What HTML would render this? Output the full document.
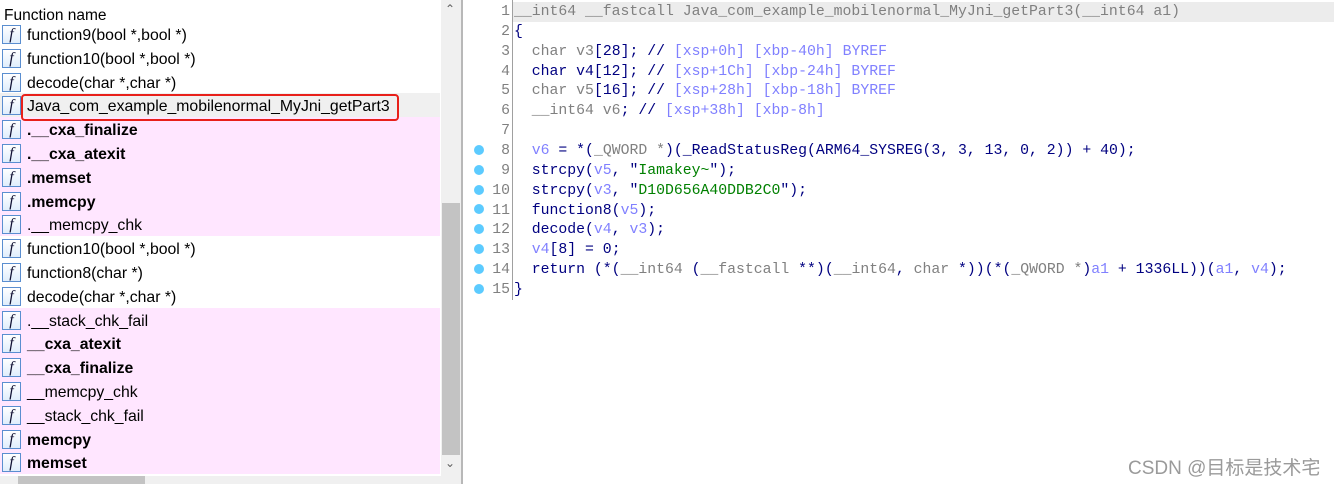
<!DOCTYPE html>
<html><head><meta charset="utf-8"><style>
*{margin:0;padding:0;box-sizing:border-box}
body{width:1334px;height:484px;background:#fff;position:relative;overflow:hidden;font-family:"Liberation Sans","Noto Sans CJK SC",sans-serif}
.hdr{position:absolute;left:4px;top:7px;font-size:15.5px;color:#000}
.row{position:absolute;left:0;width:440px;height:23.8px;font-size:15.8px;color:#000;line-height:23.8px}
.row span{position:absolute;left:27px;top:2px}
.row b{position:absolute;left:27px;top:2px;font-weight:bold}
.ic{position:absolute;left:2px;top:3px;width:19px;height:19px;border:1px solid #5a8ed0;background:linear-gradient(#fff,#dfeefc);font-family:"Liberation Serif",serif;font-style:italic;font-size:16px;line-height:17px;text-align:center;color:#113}
.pk{background:#ffe6ff}
.sel{background:#f0f0f0}
.code{position:absolute;left:514px;font-family:"Liberation Mono",monospace;font-size:14.8px;white-space:pre;color:#000080;line-height:19.86px}
.ln{position:absolute;width:30px;left:480px;text-align:right;font-family:"Liberation Mono",monospace;font-size:14.8px;color:#808080;line-height:19.86px}
.dot{position:absolute;left:474px;width:10px;height:10px;border-radius:50%;background:#5ccbff}
.g{color:#808080}.c{color:#8080ff}.v{color:#8080ff}.s{color:#008000}
</style></head><body>
<div class="hdr">Function name</div>
<div style="position:absolute;left:0;top:22px;width:440px;height:453px">
<div class="row" style="top:0"><div class="ic">f</div><span>function9(bool *,bool *)</span></div>
<div class="row" style="top:23.8px"><div class="ic">f</div><span>function10(bool *,bool *)</span></div>
<div class="row" style="top:47.6px"><div class="ic">f</div><span>decode(char *,char *)</span></div>
<div class="row sel" style="top:71.4px"><div class="ic">f</div><span>Java_com_example_mobilenormal_MyJni_getPart3</span></div>
<div class="row pk" style="top:95.2px"><div class="ic">f</div><b>.__cxa_finalize</b></div>
<div class="row pk" style="top:119px"><div class="ic">f</div><b>.__cxa_atexit</b></div>
<div class="row pk" style="top:142.8px"><div class="ic">f</div><b>.memset</b></div>
<div class="row pk" style="top:166.6px"><div class="ic">f</div><b>.memcpy</b></div>
<div class="row pk" style="top:190.4px"><div class="ic">f</div><span>.__memcpy_chk</span></div>
<div class="row" style="top:214.2px"><div class="ic">f</div><span>function10(bool *,bool *)</span></div>
<div class="row" style="top:238px"><div class="ic">f</div><span>function8(char *)</span></div>
<div class="row" style="top:261.8px"><div class="ic">f</div><span>decode(char *,char *)</span></div>
<div class="row pk" style="top:285.6px"><div class="ic">f</div><span>.__stack_chk_fail</span></div>
<div class="row pk" style="top:309.4px"><div class="ic">f</div><b>__cxa_atexit</b></div>
<div class="row pk" style="top:333.2px"><div class="ic">f</div><b>__cxa_finalize</b></div>
<div class="row pk" style="top:357px"><div class="ic">f</div><span>__memcpy_chk</span></div>
<div class="row pk" style="top:380.8px"><div class="ic">f</div><span>__stack_chk_fail</span></div>
<div class="row pk" style="top:404.6px"><div class="ic">f</div><b>memcpy</b></div>
<div class="row pk" style="top:428.4px"><div class="ic">f</div><b>memset</b></div>
</div>
<div style="position:absolute;left:21px;top:94px;width:378px;height:27px;border:2px solid #e8201a;border-radius:4px"></div>
<div style="position:absolute;left:441px;top:0;width:20px;height:476px;background:#f0f0f0"></div>
<div style="position:absolute;left:442px;top:203px;width:18px;height:252px;background:#c3c3c3"></div>
<div style="position:absolute;left:445px;top:2px;font-size:12px;color:#606060">&#8963;</div>
<div style="position:absolute;left:445px;top:456px;font-size:12px;color:#606060">&#8964;</div>
<div style="position:absolute;left:461px;top:0;width:2px;height:484px;background:#b8b8b8"></div>
<div style="position:absolute;left:0;top:476px;width:461px;height:8px;background:#f0f0f0"></div>
<div style="position:absolute;left:18px;top:476px;width:127px;height:8px;background:#c3c3c3"></div>
<div style="position:absolute;left:512px;top:2px;width:822px;height:20px;background:#ececec"></div>
<div style="position:absolute;left:512px;top:0;width:1px;height:300px;background:#a0a0a0"></div>
<div class="ln" style="top:3px">1<br>2<br>3<br>4<br>5<br>6<br>7<br>8<br>9<br>10<br>11<br>12<br>13<br>14<br>15</div>
<div class="dot" style="top:145px"></div><div class="dot" style="top:165px"></div><div class="dot" style="top:185px"></div><div class="dot" style="top:204px"></div><div class="dot" style="top:224px"></div><div class="dot" style="top:244px"></div><div class="dot" style="top:264px"></div><div class="dot" style="top:284px"></div>
<div class="code" style="top:3px"><span class="g">__int64 __fastcall Java_com_example_mobilenormal_MyJni_getPart3(__int64 a1)</span>
{
  <span class="g">char v3</span>[28]; // <span class="c">[xsp+0h] [xbp-40h] BYREF</span>
  char v4[12]; // <span class="c">[xsp+1Ch] [xbp-24h] BYREF</span>
  <span class="g">char v5</span>[16]; // <span class="c">[xsp+28h] [xbp-18h] BYREF</span>
  <span class="g">__int64 v6</span>; // <span class="c">[xsp+38h] [xbp-8h]</span>

  <span class="v">v6</span> = *(<span class="g">_QWORD *</span>)(_ReadStatusReg(ARM64_SYSREG(3, 3, 13, 0, 2)) + 40);
  strcpy(<span class="v">v5</span>, "<span class="s">Iamakey~</span>");
  strcpy(<span class="v">v3</span>, "<span class="s">D10D656A40DDB2C0</span>");
  function8(<span class="v">v5</span>);
  decode(<span class="v">v4</span>, <span class="v">v3</span>);
  <span class="v">v4</span>[8] = 0;
  return (*(<span class="g">__int64</span> (<span class="g">__fastcall</span> **)(<span class="g">__int64</span>, <span class="g">char</span> *))(*(<span class="g">_QWORD *</span>)<span class="v">a1</span> + 1336LL))(<span class="v">a1</span>, <span class="v">v4</span>);
}</div>
<div style="position:absolute;left:1128px;top:453px;font-size:19px;color:#9a9a9a;font-family:'Liberation Sans','Noto Sans CJK SC',sans-serif">CSDN @目标是技术宅</div>
</body></html>
